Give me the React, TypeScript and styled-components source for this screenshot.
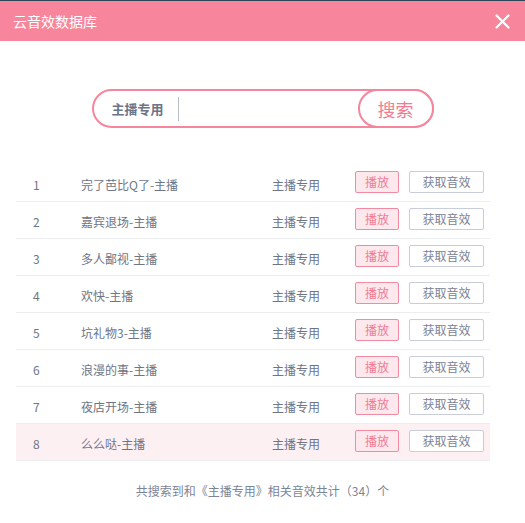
import { createGlobalStyle } from 'styled-components';
import styled from 'styled-components';

const GlobalStyle = createGlobalStyle`
  html, body {
    margin: 0;
    padding: 0;
    background: #ffffff;
    font-family: "Noto Sans CJK SC", "Liberation Sans", sans-serif;
  }
`;

const Dialog = styled.div`
  width: 525px;
  height: 523px;
  display: flex;
  flex-direction: column;
  background: #ffffff;
  border-top: 1px solid #2b4656;
  box-sizing: border-box;
`;

const Header = styled.div`
  height: 40px;
  background: #f7869c;
  display: flex;
  align-items: center;
  justify-content: space-between;
  padding: 0 15px 0 13px;
`;

const Title = styled.span`
  color: #ffffff;
  font-size: 14px;
  line-height: 1;
`;

const CloseButton = styled.button`
  border: none;
  background: transparent;
  padding: 0;
  width: 15px;
  height: 15px;
  display: flex;
  cursor: pointer;
`;

const SearchArea = styled.div`
  display: flex;
  justify-content: center;
  padding: 48px 0 37px 0;
`;

const SearchBox = styled.div`
  width: 342px;
  height: 39px;
  box-sizing: border-box;
  border: 2px solid #f5869d;
  border-radius: 20px;
  display: flex;
  align-items: center;
  padding-left: 18px;
`;

const Category = styled.span`
  flex-shrink: 0;
  white-space: nowrap;
  font-size: 13px;
  font-weight: bold;
  color: #6b7488;
  padding-right: 14px;
  border-right: 1px solid #b8bcc6;
  line-height: 24px;
`;

const SearchInput = styled.input`
  flex: 1;
  min-width: 0;
  border: none;
  outline: none;
  height: 100%;
  background: transparent;
`;

const SearchButton = styled.button`
  flex-shrink: 0;
  width: 76px;
  height: 39px;
  margin: -2px -2px -2px 0;
  box-sizing: border-box;
  border: 2px solid #f5869d;
  border-radius: 20px;
  background: #ffffff;
  color: #f27b94;
  font-size: 18px;
  font-family: inherit;
  padding: 0;
  cursor: pointer;
`;

const Table = styled.div`
  margin: 0 35px 0 16px;
  display: flex;
  flex-direction: column;
`;

const Row = styled.div<{ $active?: boolean }>`
  height: 37px;
  box-sizing: border-box;
  border-bottom: 1px solid #ebedf0;
  background: ${(p) => (p.$active ? '#fdf0f3' : 'transparent')};
  display: grid;
  grid-template-columns: 65px 191px 83px 54px auto;
  align-items: center;
  font-size: 12px;
  color: #6e7585;
`;

const Cell = styled.span<{ $indent?: boolean }>`
  padding-top: 3px;
  padding-left: ${(p) => (p.$indent ? '17px' : '0')};
`;

const PlayButton = styled.button`
  width: 44px;
  height: 22px;
  box-sizing: border-box;
  border: 1px solid #f38aa0;
  border-radius: 2px;
  background: #fde8ee;
  color: #f27b94;
  font-size: 12px;
  font-family: inherit;
  padding: 0;
  margin-bottom: 3px;
`;

const GetButton = styled.button`
  width: 75px;
  height: 22px;
  box-sizing: border-box;
  border: 1px solid #c9cdd9;
  border-radius: 2px;
  background: #ffffff;
  color: #7b8294;
  font-size: 12px;
  font-family: inherit;
  padding: 0;
  margin-bottom: 3px;
`;

const Footer = styled.div`
  text-align: center;
  font-size: 12px;
  color: #7d8495;
  padding-top: 21px;
`;

const items = [
  '完了芭比Q了-主播',
  '嘉宾退场-主播',
  '多人鄙视-主播',
  '欢快-主播',
  '坑礼物3-主播',
  '浪漫的事-主播',
  '夜店开场-主播',
  '么么哒-主播',
];

export default function App() {
  return (
    <>
      <GlobalStyle />
      <Dialog>
        <Header>
          <Title>云音效数据库</Title>
          <CloseButton aria-label="关闭">
            <svg width="15" height="15" viewBox="0 0 15 15">
              <path d="M1.5 1.5L13.5 13.5M13.5 1.5L1.5 13.5" stroke="#ffffff" strokeWidth="2.2" strokeLinecap="round" />
            </svg>
          </CloseButton>
        </Header>
        <SearchArea>
          <SearchBox>
            <Category>主播专用</Category>
            <SearchInput />
            <SearchButton>搜索</SearchButton>
          </SearchBox>
        </SearchArea>
        <Table>
          {items.map((name, i) => (
            <Row key={name} $active={i === items.length - 1}>
              <Cell $indent>{i + 1}</Cell>
              <Cell>{name}</Cell>
              <Cell>主播专用</Cell>
              <PlayButton>播放</PlayButton>
              <GetButton>获取音效</GetButton>
            </Row>
          ))}
        </Table>
        <Footer>共搜索到和《主播专用》相关音效共计（34）个</Footer>
      </Dialog>
    </>
  );
}
